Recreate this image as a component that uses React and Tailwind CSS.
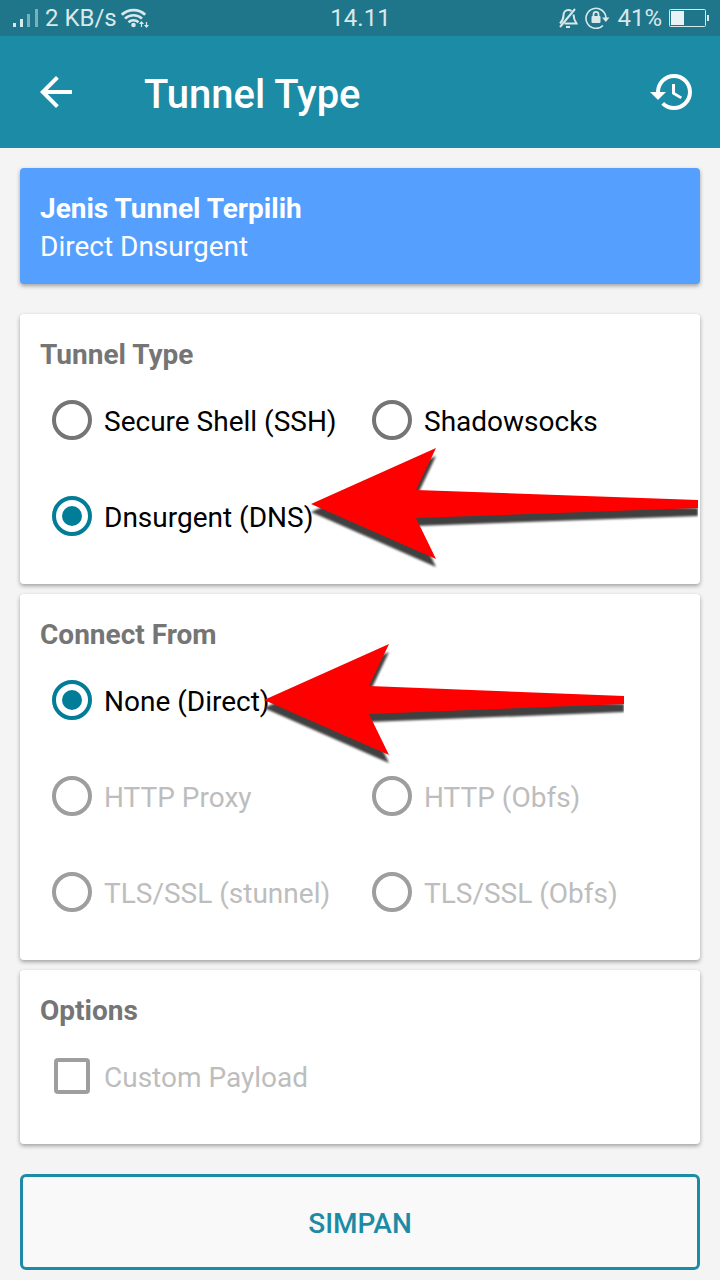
import { useState } from "react";
import { MdArrowBack, MdHistory } from "react-icons/md";

const TUNNEL_TYPES = [
  { id: "ssh", label: "Secure Shell (SSH)" },
  { id: "shadowsocks", label: "Shadowsocks" },
  { id: "dns", label: "Dnsurgent (DNS)" }
];

const CONNECT_FROM = [
  { id: "direct", label: "None (Direct)", wide: true },
  { id: "http", label: "HTTP Proxy", disabled: true },
  { id: "http-obfs", label: "HTTP (Obfs)", disabled: true },
  { id: "stunnel", label: "TLS/SSL (stunnel)", disabled: true },
  { id: "tls-obfs", label: "TLS/SSL (Obfs)", disabled: true }
];

function SignalIcon() {
  return (
    <svg width="29" height="20" viewBox="0 0 29 20" fill="#d8e8eb" aria-hidden="true">
      <rect x="1" y="15" width="3" height="4" />
      <rect x="8" y="11" width="3" height="8" />
      <rect x="15" y="6" width="3" height="13" opacity="0.5" />
      <rect x="23" y="1" width="3" height="18" opacity="0.5" />
    </svg>
  );
}

function WifiIcon() {
  return (
    <svg width="30" height="20" viewBox="0 0 30 20" fill="none" stroke="#d8e8eb" aria-hidden="true">
      <path d="M0.800 6.800a17 17 0 0 1 23.400 0" strokeWidth="2.9" />
      <path d="M4 10.600a12.400 12.400 0 0 1 17 0" strokeWidth="2.6" />
      <path d="M7.500 14.200a7.200 7.200 0 0 1 10 0" strokeWidth="2.6" />
      <circle cx="12.500" cy="17" r="2.300" fill="#d8e8eb" stroke="none" />
      <path d="M20.500 19v-5M25.500 14v5" strokeWidth="1.2" />
      <path d="M18 16l2.500-3 2.500 3zM23 17l2.500 3 2.500-3z" fill="#d8e8eb" stroke="none" />
    </svg>
  );
}

function BellOffIcon() {
  return (
    <svg width="20" height="21" viewBox="0 0 20 21" fill="none" stroke="#d8e8eb" strokeWidth="2" aria-hidden="true">
      <path d="M13.500 3C12.500 2.300 11.500 2 10.500 2c-3.300 0-5 2.500-5 5.400 0 3.700-1.200 5.600-3.500 8.100" />
      <path d="M15.500 6.500c0 4 1 6.200 3 9H6.500" />
      <path d="M17 1 2 19" />
      <path d="M8 19h4" />
    </svg>
  );
}

function RotationLockIcon() {
  return (
    <svg width="25" height="22" viewBox="0 0 25 22" fill="none" stroke="#d8e8eb" strokeWidth="1.6" aria-hidden="true">
      <path d="M21 11A10 10 0 1 0 18 18.500" />
      <path d="M17 10.500h7.500L20.800 15z" fill="#d8e8eb" stroke="none" />
      <path d="M8.500 10V7.300a2.500 2.500 0 0 1 5 0V10" strokeWidth="1.8" />
      <rect x="6.500" y="9" width="9" height="7" rx="1" fill="#d8e8eb" stroke="none" />
    </svg>
  );
}

function BatteryIcon() {
  return (
    <svg width="40" height="18" viewBox="0 0 40 18" aria-hidden="true">
      <rect x="0.5" y="0.5" width="36" height="17" rx="1" fill="none" stroke="#d8e8eb" />
      <rect x="2" y="2" width="13" height="14" fill="#e9f2f4" />
      <rect x="38" y="6" width="2" height="6" fill="#d8e8eb" />
    </svg>
  );
}

function StatusBar() {
  return (
    <div className="flex h-9 items-center justify-between bg-[#1f768a] pr-[11px] pl-3 text-2xl text-[#d8e8eb]">
      <div className="flex flex-1 items-center gap-1">
        <SignalIcon />
        <span>2 KB/s</span>
        <WifiIcon />
      </div>
      <span>14.11</span>
      <div className="flex flex-1 items-center justify-end gap-[7px]">
        <BellOffIcon />
        <RotationLockIcon />
        <span>41%</span>
        <BatteryIcon />
      </div>
    </div>
  );
}

function Card({ title, children }) {
  return (
    <section className="relative rounded bg-white p-5 shadow-[0_2px_4px_rgba(0,0,0,0.35)]">
      <h2 className="pt-1 text-[28px] leading-[34px] font-bold text-[#757575]">{title}</h2>
      {children}
    </section>
  );
}

function RadioOption({ name, option, checked, onSelect }) {
  return (
    <label
      className={`flex h-24 items-center gap-3 pl-3 text-[28px] ${option.wide ? "col-span-2" : ""} ${
        option.disabled ? "text-[#bdbdbd]" : "text-black"
      }`}
    >
      <input
        type="radio"
        name={name}
        checked={checked}
        disabled={option.disabled}
        onChange={() => onSelect(option.id)}
        className="grid size-10 shrink-0 appearance-none place-items-center rounded-full border-4 border-[#757575] before:size-5 before:rounded-full checked:border-[#027d98] checked:before:bg-[#027d98] disabled:border-[#9e9e9e]"
      />
      <span className="pt-1 whitespace-nowrap">{option.label}</span>
    </label>
  );
}

function ArrowMark({ length, className }) {
  const points = `0,56 125,0 105,42 ${length},52 ${length},60 105,70 125,111`;

  return (
    <svg
      width={length}
      height="124"
      viewBox={`0 0 ${length} 124`}
      className={`pointer-events-none absolute ${className}`}
      aria-hidden="true"
    >
      <polygon points={points} fill="#404040" transform="translate(0 8)" className="blur-[1px]" />
      <polygon points={points} fill="#ff0000" />
    </svg>
  );
}

export default function App() {
  const [tunnel, setTunnel] = useState("dns");
  const [source, setSource] = useState("direct");

  return (
    <div className="min-h-screen bg-[#f4f4f4] font-[Roboto,sans-serif]">
      <StatusBar />
      <header className="flex h-28 items-center bg-[#1c8ba5] px-6 text-white">
        <button type="button" aria-label="Back" className="ml-2">
          <MdArrowBack className="size-12" />
        </button>
        <h1 className="ml-16 flex-1 pt-[6px] text-[40px] font-medium">Tunnel Type</h1>
        <button type="button" aria-label="History">
          <MdHistory className="size-12" />
        </button>
      </header>

      <main className="flex flex-col gap-[10px] px-5 pt-5 pb-[10px]">
        <section className="mb-5 rounded bg-[#559fff] px-5 pt-[22px] pb-[18px] text-[28px] leading-[38px] text-white shadow-[0_2px_4px_rgba(0,0,0,0.35)]">
          <h2 className="font-bold">Jenis Tunnel Terpilih</h2>
          <p>Direct Dnsurgent</p>
        </section>

        <Card title="Tunnel Type">
          <div className="grid grid-cols-2">
            {TUNNEL_TYPES.map((option) => (
              <RadioOption
                key={option.id}
                name="tunnel"
                option={option}
                checked={tunnel === option.id}
                onSelect={setTunnel}
              />
            ))}
          </div>
          <ArrowMark length={387} className="top-[134px] left-[291px]" />
        </Card>

        <Card title="Connect From">
          <div className="grid grid-cols-2">
            {CONNECT_FROM.map((option) => (
              <RadioOption
                key={option.id}
                name="source"
                option={option}
                checked={source === option.id}
                onSelect={setSource}
              />
            ))}
          </div>
          <ArrowMark length={360} className="top-[50px] left-[244px]" />
        </Card>

        <Card title="Options">
          <label className="flex h-24 items-center gap-[14px] pl-[14px] text-[28px] text-[#bdbdbd]">
            <input
              type="checkbox"
              disabled
              className="size-9 shrink-0 appearance-none rounded border-4 border-[#9e9e9e]"
            />
            <span className="pt-1">Custom Payload</span>
          </label>
        </Card>

        <button
          type="button"
          className="mt-5 h-24 rounded-md border-[3px] border-[#1c8ba5] bg-[#f9f9f9] pt-1 text-[28px] font-medium text-[#1c8ba5]"
        >
          SIMPAN
        </button>
      </main>
    </div>
  );
}
